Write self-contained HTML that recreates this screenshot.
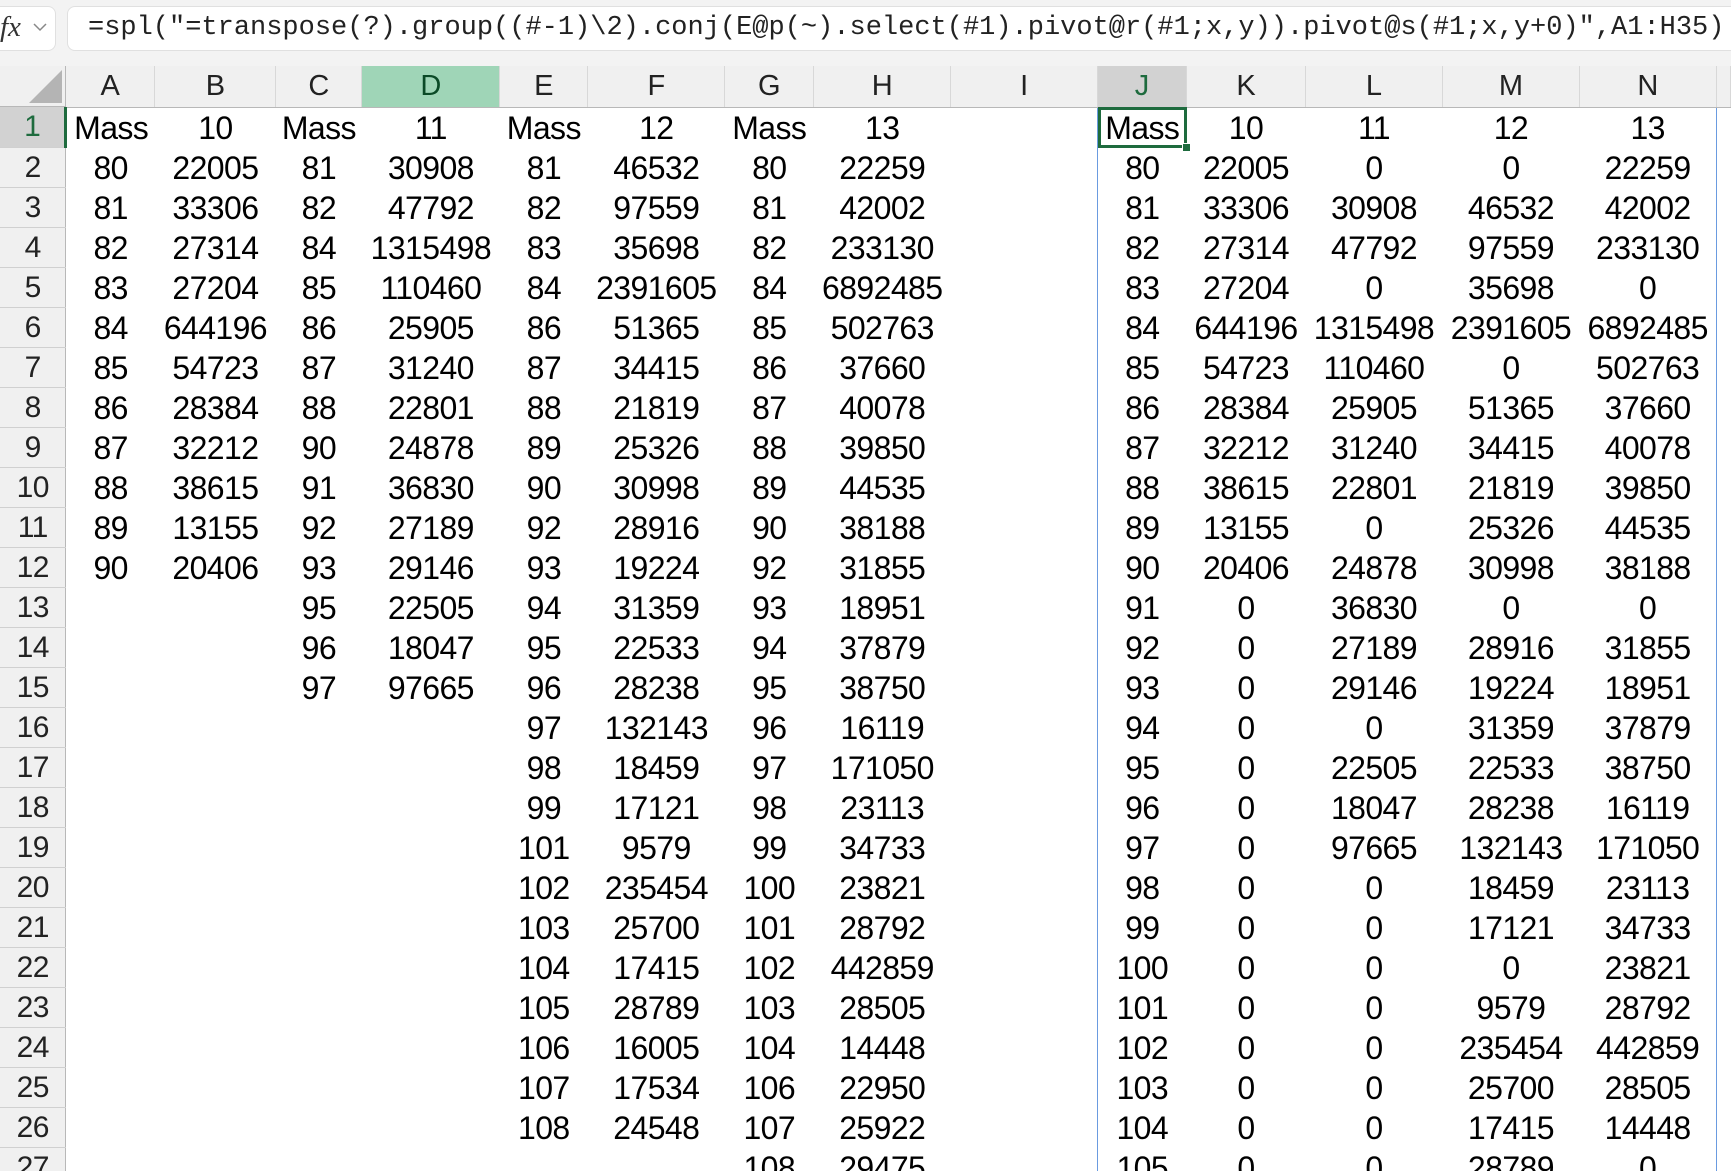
<!DOCTYPE html>
<html><head><meta charset="utf-8"><style>
body{margin:0;width:1731px;height:1171px;overflow:hidden;background:#f3f3f3;font-family:"Liberation Sans",sans-serif;position:relative}
#fx{position:absolute;left:0;top:6px;width:56px;height:45px;background:#fff;border:1px solid #e0e0e0;border-left:none;border-radius:0 8px 8px 0;box-sizing:border-box}
#fx span{position:absolute;left:0;top:4px;font:italic 29px "Liberation Serif",serif;color:#333}
#fx svg{position:absolute;left:33px;top:16px}
#fbar{position:absolute;left:67px;top:6px;width:1680px;height:45px;background:#fff;border:1px solid #e0e0e0;border-radius:8px;box-sizing:border-box;font:27px "Liberation Mono",monospace;color:#222;line-height:43px;padding-left:20px;white-space:nowrap}
#grid{position:absolute;left:0;top:66px;width:1731px;height:1105px;background:#fff;overflow:hidden}
table{border-collapse:collapse;table-layout:fixed;font-size:32px;letter-spacing:-0.6px;color:#000}
td,th{height:40px;padding:0;text-align:center;white-space:nowrap;overflow:visible;box-sizing:border-box;font-weight:normal}
thead th{height:41px;background:#f0f0f0;border-right:1px solid #d8d8d8;border-bottom:1px solid #b8b8b8;font-size:29px;color:#222;letter-spacing:0}
tbody th{background:#f0f0f0;border-bottom:1px solid #d0d0d0;border-right:1px solid #b8b8b8;font-size:30px;color:#222}
tbody td{line-height:40px}
.sp{border-left:1px solid #6a9be0;}
.spr{border-right:1px solid #6a9be0;}
</style></head><body>
<div id="fx"><span>fx</span><svg width="14" height="9"><path d="M1 1 L7 7 L13 1" fill="none" stroke="#888" stroke-width="1.5"/></svg></div>
<div id="fbar">=spl("=transpose(?).group((#-1)\2).conj(E@p(~).select(#1).pivot@r(#1;x,y)).pivot@s(#1;x,y+0)",A1:H35)</div>
<div id="grid">
<div style="position:absolute;left:0;top:0;width:66px;height:41px;background:#f0f0f0;border-right:1px solid #b8b8b8;border-bottom:1px solid #b8b8b8;box-sizing:border-box"><svg width="66" height="41" style="position:absolute;left:0;top:0"><polygon points="62,4 62,37 29,37" fill="#b4b4b4"/></svg></div>
<table style="position:absolute;left:0;top:0">
<colgroup><col style="width:66px"><col style="width:89px"><col style="width:121px"><col style="width:86px"><col style="width:138px"><col style="width:88px"><col style="width:137px"><col style="width:89px"><col style="width:137px"><col style="width:147px"><col style="width:89px"><col style="width:119px"><col style="width:137px"><col style="width:137px"><col style="width:137px"><col style="width:14px"></colgroup>
<thead><tr><th style="background:transparent;border:none"></th><th>A</th><th>B</th><th>C</th><th style="background:#9fd5b7;color:#0b4a27">D</th><th>E</th><th>F</th><th>G</th><th>H</th><th>I</th><th style="background:#d2d2d2;color:#1e6b3e">J</th><th>K</th><th>L</th><th>M</th><th>N</th><th></th></tr></thead>
<tbody>
<tr><th style="background:#d2d2d2;color:#1e6b3e;border-right:3px solid #1e6b3e">1</th><td>Mass</td><td>10</td><td>Mass</td><td>11</td><td>Mass</td><td>12</td><td>Mass</td><td>13</td><td></td><td class="sp" style="outline:3px solid #1e6b3e;outline-offset:-3px;position:relative">Mass<div style="position:absolute;right:-4px;bottom:-4px;width:7px;height:7px;background:#1e6b3e;border:1px solid #fff"></div></td><td>10</td><td>11</td><td>12</td><td class="spr">13</td><td></td></tr>
<tr><th>2</th><td>80</td><td>22005</td><td>81</td><td>30908</td><td>81</td><td>46532</td><td>80</td><td>22259</td><td></td><td class="sp">80</td><td>22005</td><td>0</td><td>0</td><td class="spr">22259</td><td></td></tr>
<tr><th>3</th><td>81</td><td>33306</td><td>82</td><td>47792</td><td>82</td><td>97559</td><td>81</td><td>42002</td><td></td><td class="sp">81</td><td>33306</td><td>30908</td><td>46532</td><td class="spr">42002</td><td></td></tr>
<tr><th>4</th><td>82</td><td>27314</td><td>84</td><td>1315498</td><td>83</td><td>35698</td><td>82</td><td>233130</td><td></td><td class="sp">82</td><td>27314</td><td>47792</td><td>97559</td><td class="spr">233130</td><td></td></tr>
<tr><th>5</th><td>83</td><td>27204</td><td>85</td><td>110460</td><td>84</td><td>2391605</td><td>84</td><td>6892485</td><td></td><td class="sp">83</td><td>27204</td><td>0</td><td>35698</td><td class="spr">0</td><td></td></tr>
<tr><th>6</th><td>84</td><td>644196</td><td>86</td><td>25905</td><td>86</td><td>51365</td><td>85</td><td>502763</td><td></td><td class="sp">84</td><td>644196</td><td>1315498</td><td>2391605</td><td class="spr">6892485</td><td></td></tr>
<tr><th>7</th><td>85</td><td>54723</td><td>87</td><td>31240</td><td>87</td><td>34415</td><td>86</td><td>37660</td><td></td><td class="sp">85</td><td>54723</td><td>110460</td><td>0</td><td class="spr">502763</td><td></td></tr>
<tr><th>8</th><td>86</td><td>28384</td><td>88</td><td>22801</td><td>88</td><td>21819</td><td>87</td><td>40078</td><td></td><td class="sp">86</td><td>28384</td><td>25905</td><td>51365</td><td class="spr">37660</td><td></td></tr>
<tr><th>9</th><td>87</td><td>32212</td><td>90</td><td>24878</td><td>89</td><td>25326</td><td>88</td><td>39850</td><td></td><td class="sp">87</td><td>32212</td><td>31240</td><td>34415</td><td class="spr">40078</td><td></td></tr>
<tr><th>10</th><td>88</td><td>38615</td><td>91</td><td>36830</td><td>90</td><td>30998</td><td>89</td><td>44535</td><td></td><td class="sp">88</td><td>38615</td><td>22801</td><td>21819</td><td class="spr">39850</td><td></td></tr>
<tr><th>11</th><td>89</td><td>13155</td><td>92</td><td>27189</td><td>92</td><td>28916</td><td>90</td><td>38188</td><td></td><td class="sp">89</td><td>13155</td><td>0</td><td>25326</td><td class="spr">44535</td><td></td></tr>
<tr><th>12</th><td>90</td><td>20406</td><td>93</td><td>29146</td><td>93</td><td>19224</td><td>92</td><td>31855</td><td></td><td class="sp">90</td><td>20406</td><td>24878</td><td>30998</td><td class="spr">38188</td><td></td></tr>
<tr><th>13</th><td></td><td></td><td>95</td><td>22505</td><td>94</td><td>31359</td><td>93</td><td>18951</td><td></td><td class="sp">91</td><td>0</td><td>36830</td><td>0</td><td class="spr">0</td><td></td></tr>
<tr><th>14</th><td></td><td></td><td>96</td><td>18047</td><td>95</td><td>22533</td><td>94</td><td>37879</td><td></td><td class="sp">92</td><td>0</td><td>27189</td><td>28916</td><td class="spr">31855</td><td></td></tr>
<tr><th>15</th><td></td><td></td><td>97</td><td>97665</td><td>96</td><td>28238</td><td>95</td><td>38750</td><td></td><td class="sp">93</td><td>0</td><td>29146</td><td>19224</td><td class="spr">18951</td><td></td></tr>
<tr><th>16</th><td></td><td></td><td></td><td></td><td>97</td><td>132143</td><td>96</td><td>16119</td><td></td><td class="sp">94</td><td>0</td><td>0</td><td>31359</td><td class="spr">37879</td><td></td></tr>
<tr><th>17</th><td></td><td></td><td></td><td></td><td>98</td><td>18459</td><td>97</td><td>171050</td><td></td><td class="sp">95</td><td>0</td><td>22505</td><td>22533</td><td class="spr">38750</td><td></td></tr>
<tr><th>18</th><td></td><td></td><td></td><td></td><td>99</td><td>17121</td><td>98</td><td>23113</td><td></td><td class="sp">96</td><td>0</td><td>18047</td><td>28238</td><td class="spr">16119</td><td></td></tr>
<tr><th>19</th><td></td><td></td><td></td><td></td><td>101</td><td>9579</td><td>99</td><td>34733</td><td></td><td class="sp">97</td><td>0</td><td>97665</td><td>132143</td><td class="spr">171050</td><td></td></tr>
<tr><th>20</th><td></td><td></td><td></td><td></td><td>102</td><td>235454</td><td>100</td><td>23821</td><td></td><td class="sp">98</td><td>0</td><td>0</td><td>18459</td><td class="spr">23113</td><td></td></tr>
<tr><th>21</th><td></td><td></td><td></td><td></td><td>103</td><td>25700</td><td>101</td><td>28792</td><td></td><td class="sp">99</td><td>0</td><td>0</td><td>17121</td><td class="spr">34733</td><td></td></tr>
<tr><th>22</th><td></td><td></td><td></td><td></td><td>104</td><td>17415</td><td>102</td><td>442859</td><td></td><td class="sp">100</td><td>0</td><td>0</td><td>0</td><td class="spr">23821</td><td></td></tr>
<tr><th>23</th><td></td><td></td><td></td><td></td><td>105</td><td>28789</td><td>103</td><td>28505</td><td></td><td class="sp">101</td><td>0</td><td>0</td><td>9579</td><td class="spr">28792</td><td></td></tr>
<tr><th>24</th><td></td><td></td><td></td><td></td><td>106</td><td>16005</td><td>104</td><td>14448</td><td></td><td class="sp">102</td><td>0</td><td>0</td><td>235454</td><td class="spr">442859</td><td></td></tr>
<tr><th>25</th><td></td><td></td><td></td><td></td><td>107</td><td>17534</td><td>106</td><td>22950</td><td></td><td class="sp">103</td><td>0</td><td>0</td><td>25700</td><td class="spr">28505</td><td></td></tr>
<tr><th>26</th><td></td><td></td><td></td><td></td><td>108</td><td>24548</td><td>107</td><td>25922</td><td></td><td class="sp">104</td><td>0</td><td>0</td><td>17415</td><td class="spr">14448</td><td></td></tr>
<tr><th>27</th><td></td><td></td><td></td><td></td><td></td><td></td><td>108</td><td>29475</td><td></td><td class="sp">105</td><td>0</td><td>0</td><td>28789</td><td class="spr">0</td><td></td></tr>
</tbody></table>
</div>
</body></html>
